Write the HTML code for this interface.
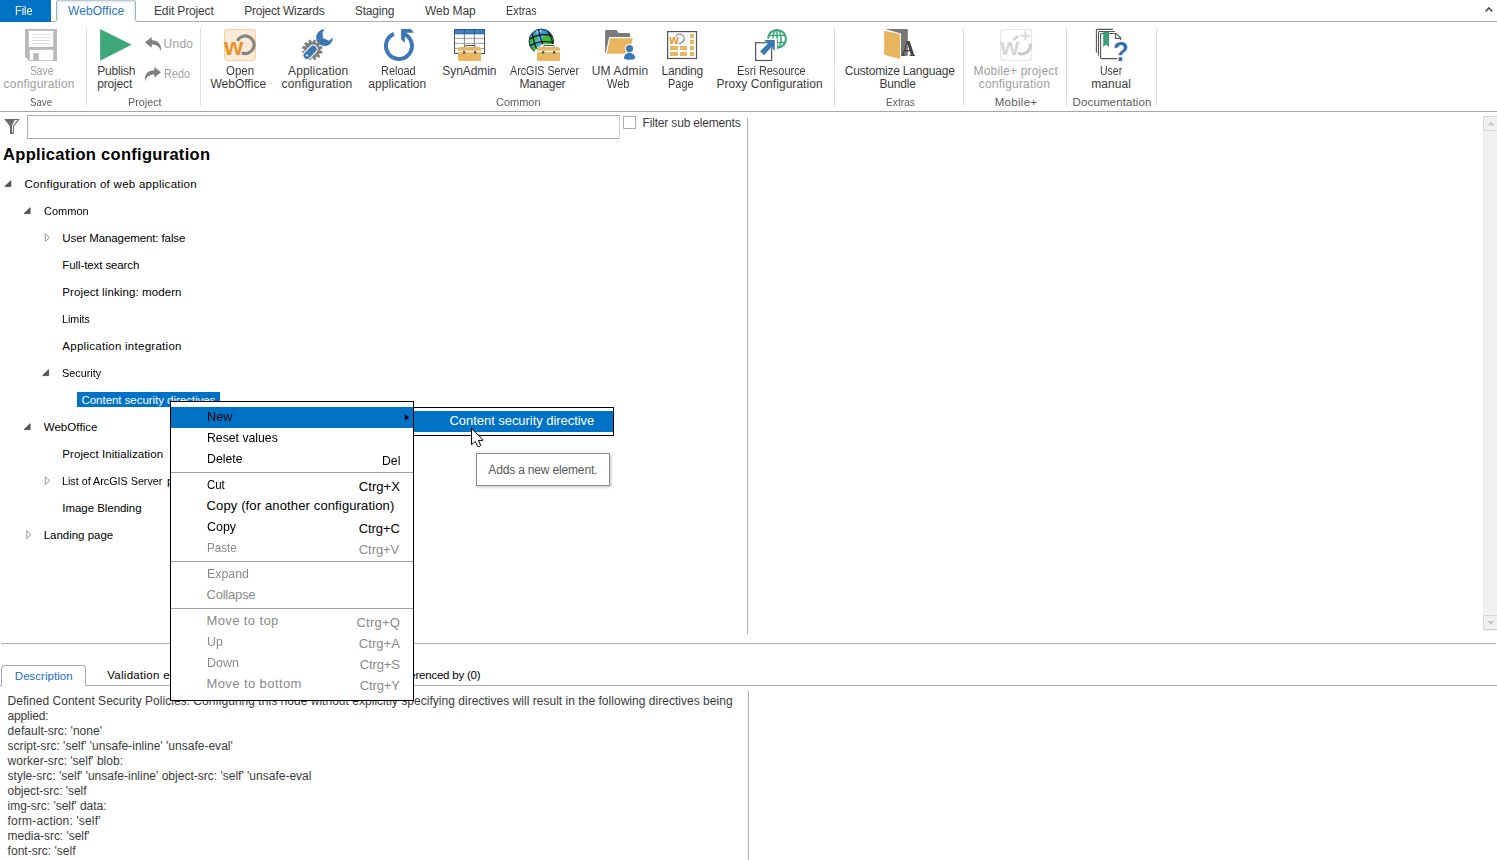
<!DOCTYPE html>
<html lang="en"><head><meta charset="utf-8"><title>WebOffice author</title>
<style>
html,body{margin:0;padding:0;background:#fff;}
body{width:1497px;height:860px;overflow:hidden;position:relative;font-family:"Liberation Sans",sans-serif;}
.t{position:absolute;white-space:pre;font-family:"Liberation Sans",sans-serif;}
.a{position:absolute;}
.ln{position:absolute;background:#ababab;}
.sep{position:absolute;background:#dedede;width:1px;top:28px;height:78px;}
svg{position:absolute;overflow:visible;}

</style></head>
<body>
<!-- tab strip -->
<div class="a" style="left:0;top:0;width:51px;height:22px;background:#0072c6"></div>
<svg width="1497" height="24" style="left:0;top:0">
<path d="M58.5 21.5 V2.5 H133.5 V21.5" fill="none" stroke="#eef2fc" stroke-width="1"/>
<path d="M57.5 21.5 V3 Q57.5 1.5 59 1.5 H133 Q134.5 1.5 134.5 3 V21.5" fill="none" stroke="#d9f3fc" stroke-width="1"/>
<path d="M51 21.5 H54.5 Q56.5 21.5 56.5 19.5 V2.5 Q56.5 0.2 58.5 0.2 H133.5 Q135.5 0.2 135.5 2.5 V19.5 Q135.5 21.5 137.5 21.5 H1497" fill="none" stroke="#ababab" stroke-width="1"/>
</svg>
<!-- ribbon -->
<div class="ln" style="left:0;top:111px;width:1497px;height:1px;background:#a5a5a5"></div>
<div class="sep" style="left:86px"></div>
<div class="sep" style="left:200px"></div>
<div class="sep" style="left:834px"></div>
<div class="sep" style="left:963px"></div>
<div class="sep" style="left:1066px"></div>
<div class="sep" style="left:1156px"></div>
<!-- filter row -->
<div class="a" style="left:27px;top:115px;width:593px;height:24px;border:1px solid #ababab;border-right-color:#d0d0d0;box-sizing:border-box"></div>
<div class="a" style="left:623px;top:116px;width:13px;height:13px;border:1px solid #ababab;box-sizing:border-box"></div>
<div class="ln" style="left:747px;top:118px;width:1px;height:516px"></div>
<!-- scrollbar -->
<div class="a" style="left:1483px;top:116px;width:14px;height:515px;background:#f0f0f0"></div>
<div class="a" style="left:1483px;top:116px;width:17px;height:15px;border:1px solid #d6d6d6;box-sizing:border-box;background:#f0f0f0"></div>
<div class="a" style="left:1483px;top:615px;width:17px;height:15px;border:1px solid #d6d6d6;box-sizing:border-box;background:#f0f0f0"></div>
<!-- tree selection -->
<div class="a" style="left:77px;top:392px;width:143px;height:15px;background:#0072c6"></div>
<!-- bottom -->
<div class="ln" style="left:1px;top:643px;width:1495px;height:1px"></div>
<div class="ln" style="left:0;top:685px;width:1497px;height:1px"></div>
<div class="a" style="left:1px;top:665px;width:85px;height:21px;background:#fff;border:1px solid #ababab;border-bottom:none;border-radius:4px 4px 0 0;box-sizing:border-box"></div>
<div class="ln" style="left:748px;top:691px;width:1px;height:169px"></div>
<svg width="1497" height="860" style="left:0;top:0">
<defs><filter id="gs" x="-10%" y="-10%" width="120%" height="120%"><feColorMatrix type="saturate" values="0"/></filter></defs>
<!-- chevron -->
<path d="M1485.6 11.3 L1488.9 7.9 L1492.2 11.3" fill="none" stroke="#555" stroke-width="1.7"/>
<!-- save icon -->
<g id="ic-save">
<path d="M25 29 H57 V61 H29 L25 56.7 Z" fill="#b9b9b9"/>
<rect x="28.8" y="30.8" width="24.4" height="16.1" fill="#fff"/>
<path d="M32 34.5 H50 M32 37.5 H50 M32 40.5 H50 M32 43.5 H50" stroke="#d9d9d9" stroke-width="0.9"/>
<rect x="29.8" y="49.9" width="23.4" height="10.3" fill="#fff"/>
<rect x="33.2" y="53.2" width="5.6" height="7.6" fill="#b9b9b9"/>
</g>
<!-- publish -->
<path d="M100.1 28.9 L131.6 44.8 L100.1 60.8 Z" fill="#3ea77a"/>
<!-- undo / redo -->
<path d="M145 42.3 L151.7 36.9 V40.2 C158.5 40.2 161.8 44.5 160.9 51.2 C159.5 46.6 156.5 44.6 151.7 44.6 V47.7 Z" fill="#7f7f7f"/>
<path d="M161 72.3 L154.3 66.9 V70.2 C147.5 70.2 144.2 74.5 145.1 81.2 C146.5 76.6 149.5 74.6 154.3 74.6 V77.7 Z" fill="#7f7f7f"/>
<!-- open weboffice -->
<rect x="224.5" y="29.5" width="31" height="31" rx="2.5" fill="#fdebd9" stroke="#f8cf9d" stroke-width="1"/>
<g><text x="224.1" y="55.4" font-family="Liberation Sans, sans-serif" font-weight="bold" font-size="24.5" fill="#e8912b" textLength="19.2" lengthAdjust="spacingAndGlyphs">w</text></g>
<path d="M237.4 40.8 A8.8 8.8 0 1 1 241.7 52.8" fill="none" stroke="#868681" stroke-width="3.2"/>
<!-- app config -->
<path d="M324.6 29.3 A8.4 8.4 0 1 0 332.9 37.3 L329.2 40.7 L322.9 37.9 L322.6 32.5 Z" fill="#3b78b5"/>
<path d="M320.2 50.7 L322.3 51.5 L321.7 53.5 L319.5 53.1 L318.7 54.5 L320.1 56.3 L318.7 57.7 L316.9 56.3 L315.5 57.1 L315.9 59.3 L313.9 59.9 L313.1 57.8 L311.5 57.8 L310.7 59.9 L308.7 59.3 L309.1 57.1 L307.7 56.3 L305.9 57.7 L304.5 56.3 L305.9 54.5 L305.1 53.1 L302.9 53.5 L302.3 51.5 L304.4 50.7 L304.4 49.1 L302.3 48.3 L302.9 46.3 L305.1 46.7 L305.9 45.3 L304.5 43.5 L305.9 42.1 L307.7 43.5 L309.1 42.7 L308.7 40.5 L310.7 39.9 L311.5 42.0 L313.1 42.0 L313.9 39.9 L315.9 40.5 L315.5 42.7 L316.9 43.5 L318.7 42.1 L320.1 43.5 L318.7 45.3 L319.5 46.7 L321.7 46.3 L322.3 48.3 L320.2 49.1Z" fill="#7f7f7f" stroke="#7f7f7f" stroke-width="0.6" stroke-linejoin="round"/>
<path d="M313.3 49.1 L306.9 55.5" stroke="#fff" stroke-width="9" stroke-linecap="round"/>
<path d="M313.3 49.1 L306.9 55.5" stroke="#3b78b5" stroke-width="6.8" stroke-linecap="round"/>
<circle cx="307" cy="55.5" r="1.1" fill="#fff"/>
<!-- reload -->
<path d="M393.9 33.9 A13 13 0 1 0 404.2 34" fill="none" stroke="#3b78b5" stroke-width="4"/>
<path d="M401.1 28.9 H410.9 L414.1 32.8 H407 L405 34.2 L404.9 42.8 L401.1 39.6 Z" fill="#3b78b5"/>
<!-- synadmin -->
<rect x="454.5" y="29.5" width="30" height="24" fill="#fff" stroke="#555" stroke-width="1"/>
<path d="M455 38.4 H484 M455 43.4 H484 M455 48.4 H484" stroke="#999" stroke-width="0.9"/>
<path d="M464.4 30 V53 M474.4 30 V53" stroke="#777" stroke-width="0.9"/>
<rect x="454.5" y="29.5" width="30" height="4.3" fill="#3f7fc1" stroke="#2a5a92" stroke-width="1"/>
<path d="M464.4 30 V34 M474.4 30 V34" stroke="#2a5a92" stroke-width="0.9"/>
<g transform="translate(458 0)">
<rect x="0" y="46.9" width="23" height="14" fill="#fff"/>
<path d="M6.9 47.5 V46 Q6.9 45.5 7.4 45.5 H16.6 Q17.1 45.5 17.1 46 V47.5" fill="none" stroke="#555" stroke-width="1"/>
<path d="M1.6 46.9 H21.4 L23 48.2 V50.8 H0 V48.2 Z" fill="#e9b55e"/>
<rect x="0" y="52.1" width="23" height="8.8" fill="#e9b55e"/>
<rect x="5" y="51" width="2.3" height="2.8" fill="#59616b"/><rect x="16" y="51" width="2.3" height="2.8" fill="#59616b"/>
</g>
<!-- arcgis server manager -->
<g>
<defs><radialGradient id="gg" cx="0.42" cy="0.45" r="0.6"><stop offset="0" stop-color="#6cc6f6"/><stop offset="0.6" stop-color="#2f93dc"/><stop offset="1" stop-color="#1d6fc0"/></radialGradient></defs>
<clipPath id="gclip"><circle cx="541.3" cy="41.3" r="12.2"/></clipPath>
<circle cx="541.3" cy="41.3" r="12.3" fill="url(#gg)"/>
<g clip-path="url(#gclip)">
<path d="M530.5 38.5 L536 34.8 L538.5 39 L533 42.5 L532.5 46 L529 45 Z" fill="#3fb93c"/>
<path d="M544.5 35 L549.5 33.5 L553.5 39 L553.5 44.5 L546 44.5 L541 42 L542 38.5 Z" fill="#45b83a"/>
<path d="M532 47 L536.5 44.5 L538 48 L534.5 52.5 L532.5 51Z" fill="#3fb93c"/>
<path d="M536 31 L541 29.5 L542 32 L537 33.5 Z" fill="#c9ecff" opacity="0.7"/>
<path d="M529 39.5 C536 34.5 546 33 553 36.5 M528.5 47 C536 41 548 40 555 43.5 M531.5 54 C537 48 546 46 552 49" stroke="#08140c" stroke-width="1.15" fill="none"/>
<path d="M538.5 29 C539.5 37 543 46 547 54 M546.5 29.5 C550.5 35 553 42 553.5 48 M532.5 33.5 C533.5 42 536.5 50 540.5 56" stroke="#08140c" stroke-width="1.15" fill="none"/>
</g>
<circle cx="541.3" cy="41.3" r="12.3" fill="none" stroke="#2a2a2a" stroke-width="0.9"/>
<path d="M534 53.4 L534.9 49.9 L542.3 44.3 H562 V62 H534 Z" fill="#fff"/>
</g>
<g transform="translate(537 0)">
<rect x="0" y="46.9" width="23" height="14" fill="#fff"/>
<path d="M6.9 47.5 V46 Q6.9 45.5 7.4 45.5 H16.6 Q17.1 45.5 17.1 46 V47.5" fill="none" stroke="#555" stroke-width="1"/>
<path d="M1.6 46.9 H21.4 L23 48.2 V50.8 H0 V48.2 Z" fill="#e9b55e"/>
<rect x="0" y="52.1" width="23" height="8.8" fill="#e9b55e"/>
<rect x="5" y="51" width="2.3" height="2.8" fill="#59616b"/><rect x="16" y="51" width="2.3" height="2.8" fill="#59616b"/>
</g>
<!-- um admin web -->
<path d="M605.1 31 Q605.1 30.1 606 30.1 H616.6 L618.6 33 H629 Q630 33 630 34 V36.9 H609.2 L605.8 52.8 H605.1 Z" fill="#7a7a7a"/>
<path d="M610.1 38.2 H632.9 L629 53.8 H606.8 Z" fill="#e9b55e"/>
<circle cx="629.5" cy="48.6" r="4.7" fill="#fff"/>
<path d="M622.8 60.9 V58 C622.8 54 626 51.7 629.5 51.7 C633 51.7 636.2 54 636.2 58 V60.9 Z" fill="#fff"/>
<circle cx="629.5" cy="48.6" r="3.6" fill="#3b78b5"/>
<path d="M623.9 58.5 C623.9 55 626.5 52.8 629.5 52.8 C632.5 52.8 635.1 55 635.1 58.5 C633 60.3 626 60.3 623.9 58.5 Z" fill="#3b78b5"/>
<!-- landing page -->
<rect x="667.6" y="31.6" width="28.9" height="26.9" fill="#fff" stroke="#555" stroke-width="1.2"/>
<g fill="#e9b55e"><rect x="690" y="34" width="4" height="4"/><rect x="690" y="40" width="4" height="4"/><rect x="690" y="46" width="4" height="4"/><rect x="690" y="52" width="4" height="4"/>
<rect x="670" y="46" width="8" height="4"/><rect x="680" y="46" width="7" height="4"/><rect x="670" y="52" width="8" height="4"/><rect x="680" y="52" width="7" height="4"/></g>
<g><text x="669.2" y="43.9" font-family="Liberation Sans, sans-serif" font-weight="bold" font-size="12" fill="#e8912b" textLength="9.4" lengthAdjust="spacingAndGlyphs">w</text></g>
<path d="M675.6 36.3 A4.6 4.6 0 1 1 678.2 43" fill="none" stroke="#78848a" stroke-width="1.2"/>
<!-- esri proxy -->
<g>
<clipPath id="eclip"><path d="M760 25 H792 V54 H777 V38.6 H760 Z"/></clipPath>
<g clip-path="url(#eclip)" fill="none" stroke="#3da679">
<circle cx="777" cy="38.9" r="8.9" stroke-width="2.1"/>
<ellipse cx="777" cy="38.9" rx="4.2" ry="8.9" stroke-width="1.5"/>
<path d="M777 30 V48 M769 35.5 H785 M769 42.5 H785" stroke-width="1.5"/>
</g>
<rect x="755.6" y="42.7" width="16" height="17.8" fill="#fff" stroke="#555" stroke-width="1.2"/>
<path d="M763.5 39.3 H775.6 V51.6 L771.6 47.8 L764 55.9 L759.3 51.3 L767.6 43.4 Z" fill="#fff"/>
<path d="M764.2 40.1 H774.8 V50.8 L771.3 47.3 L764 55.2 L760 51.3 L767.8 43.7 Z" fill="#3b78b5"/>
</g>
<!-- customize language bundle -->
<path d="M885.1 28.9 H906.8 Q907.8 28.9 907.8 29.9 V55.7 H901 V33.5 Z" fill="#777"/>
<path d="M884.1 30.8 L900 34 V58.9 L884.1 54.8 Z" fill="#e9b55e"/>
<g filter="url(#gs)"><text x="900.9" y="55.7" font-family="Liberation Serif, serif" font-weight="bold" font-size="24" fill="#444" textLength="14.4" lengthAdjust="spacingAndGlyphs">A</text></g>
<!-- mobile+ -->
<rect x="1000.6" y="29.5" width="30.9" height="30.9" rx="2.8" fill="#fff" stroke="#e6e6e6" stroke-width="1.2"/>
<g filter="url(#gs)"><text x="1000.3" y="55.4" font-family="Liberation Sans, sans-serif" font-weight="bold" font-size="24.5" fill="#d6d6d6" textLength="19" lengthAdjust="spacingAndGlyphs">w</text></g>
<path d="M1018 53.2 A8.8 8.8 0 0 0 1030.2 43.5" fill="none" stroke="#c9c9c9" stroke-width="3"/>
<path d="M1013.4 40.2 A8.8 8.8 0 0 1 1018.4 36.4" fill="none" stroke="#cfcfcf" stroke-width="2.6"/>
<path d="M1025.3 31.3 V40.6 M1020.9 35.9 H1029.9" stroke="#dadada" stroke-width="2.2"/>
<!-- user manual -->
<g fill="none" stroke="#555" stroke-width="1.1">
<path d="M1112.9 29.4 H1097.3 Q1096.4 29.4 1096.4 30.3 V52.8"/>
<path d="M1114.9 31.5 H1099.4 Q1098.5 31.5 1098.5 32.4 V55.7"/>
<path d="M1117.1 58.6 H1101.5 Q1100.6 58.6 1100.6 57.7 V34.4 Q1100.6 33.5 1101.5 33.5 H1116.3 L1120.7 37.8 V40.1"/>
<path d="M1115.5 33.5 V38.4 H1120.7"/>
</g>
<path d="M1103.2 31.8 H1109 V47 L1106.1 44.5 L1103.2 47 Z" fill="#3a9f77"/>
<g><text x="1112.9" y="60.7" font-family="Liberation Sans, sans-serif" font-weight="bold" font-size="28" fill="#3470b3" textLength="15.6" lengthAdjust="spacingAndGlyphs">?</text></g>
<!-- funnel -->
<path d="M4.2 119 H19.7 L13.9 126.6 V134 H10 V126.6 Z" fill="#6a6a6a"/>
<path d="M14.9 120.1 H17.4 L13 126 V132.8 H12.1 V125.3 Z" fill="#fff"/>
<!-- scroll arrows -->
<path d="M1487.5 125.5 L1491 121.5 L1494.5 125.5 Z" fill="#cdcdcd"/>
<path d="M1487.5 621 L1491 625 L1494.5 621 Z" fill="#cdcdcd"/>
<!-- tree arrows -->
<path d="M10.8 180.7 V186.6 H4.8 Z" fill="#595959" stroke="#262626" stroke-width="0.6" stroke-linejoin="round"/>
<path d="M30.1 207.7 V213.6 H24.1 Z" fill="#595959" stroke="#262626" stroke-width="0.6" stroke-linejoin="round"/>
<path d="M45.3 233.7 V241.5 L49.5 237.6 Z" fill="#fff" stroke="#989898" stroke-width="1" stroke-linejoin="miter"/>
<path d="M48.6 369.7 V375.6 H42.6 Z" fill="#595959" stroke="#262626" stroke-width="0.6" stroke-linejoin="round"/>
<path d="M30.1 423.7 V429.6 H24.1 Z" fill="#595959" stroke="#262626" stroke-width="0.6" stroke-linejoin="round"/>
<path d="M45.3 476.7 V484.5 L49.5 480.6 Z" fill="#fff" stroke="#989898" stroke-width="1" stroke-linejoin="miter"/>
<path d="M26.8 530.7 V538.5 L31.0 534.6 Z" fill="#fff" stroke="#989898" stroke-width="1" stroke-linejoin="miter"/>
</svg>
<span class="t " style="left:14.5px;top:3.20px;font-size:12px;line-height:16px;color:#fff;font-weight:normal;letter-spacing:0.000px;transform:scaleX(0.9047);transform-origin:0 0;">File</span>
<span class="t " style="left:68.0px;top:3.20px;font-size:12px;line-height:16px;color:#1f74c4;font-weight:normal;letter-spacing:0.076px;">WebOffice</span>
<span class="t " style="left:154.0px;top:3.20px;font-size:12px;line-height:16px;color:#3c3c3c;font-weight:normal;letter-spacing:-0.142px;">Edit Project</span>
<span class="t " style="left:244.2px;top:3.20px;font-size:12px;line-height:16px;color:#3c3c3c;font-weight:normal;letter-spacing:-0.245px;">Project Wizards</span>
<span class="t " style="left:354.8px;top:3.20px;font-size:12px;line-height:16px;color:#3c3c3c;font-weight:normal;letter-spacing:-0.167px;">Staging</span>
<span class="t " style="left:425.0px;top:3.20px;font-size:12px;line-height:16px;color:#3c3c3c;font-weight:normal;letter-spacing:-0.057px;">Web Map</span>
<span class="t " style="left:506.2px;top:3.20px;font-size:12px;line-height:16px;color:#3c3c3c;font-weight:normal;letter-spacing:0.000px;transform:scaleX(0.9055);transform-origin:0 0;">Extras</span>
<span class="t " style="left:29.7px;top:63.20px;font-size:12px;line-height:16px;color:#9e9e9e;font-weight:normal;letter-spacing:0.000px;transform:scaleX(0.8553);transform-origin:0 0;">Save</span>
<span class="t " style="left:3.6px;top:76.20px;font-size:12px;line-height:16px;color:#9e9e9e;font-weight:normal;letter-spacing:0.182px;">configuration</span>
<span class="t " style="left:29.7px;top:95.20px;font-size:11.5px;line-height:14px;color:#5c5c5c;font-weight:normal;letter-spacing:0.000px;transform:scaleX(0.8391);transform-origin:0 0;">Save</span>
<span class="t " style="left:97.2px;top:63.20px;font-size:12px;line-height:16px;color:#3c3c3c;font-weight:normal;letter-spacing:-0.177px;">Publish</span>
<span class="t " style="left:97.2px;top:76.20px;font-size:12px;line-height:16px;color:#3c3c3c;font-weight:normal;letter-spacing:-0.155px;">project</span>
<span class="t " style="left:163.5px;top:36.20px;font-size:12px;line-height:16px;color:#9e9e9e;font-weight:normal;letter-spacing:0.271px;">Undo</span>
<span class="t " style="left:164.3px;top:66.20px;font-size:12px;line-height:16px;color:#9e9e9e;font-weight:normal;letter-spacing:0.000px;transform:scaleX(0.9098);transform-origin:0 0;">Redo</span>
<span class="t " style="left:127.9px;top:95.20px;font-size:11.5px;line-height:14px;color:#5c5c5c;font-weight:normal;letter-spacing:0.000px;transform:scaleX(0.9386);transform-origin:0 0;">Project</span>
<span class="t " style="left:225.5px;top:63.20px;font-size:12px;line-height:16px;color:#3c3c3c;font-weight:normal;letter-spacing:0.000px;transform:scaleX(0.9537);transform-origin:0 0;">Open</span>
<span class="t " style="left:210.4px;top:76.20px;font-size:12px;line-height:16px;color:#3c3c3c;font-weight:normal;letter-spacing:0.013px;">WebOffice</span>
<span class="t " style="left:288.0px;top:63.20px;font-size:12px;line-height:16px;color:#3c3c3c;font-weight:normal;letter-spacing:0.148px;">Application</span>
<span class="t " style="left:281.6px;top:76.20px;font-size:12px;line-height:16px;color:#3c3c3c;font-weight:normal;letter-spacing:0.157px;">configuration</span>
<span class="t " style="left:381.2px;top:63.20px;font-size:12px;line-height:16px;color:#3c3c3c;font-weight:normal;letter-spacing:0.000px;transform:scaleX(0.9124);transform-origin:0 0;">Reload</span>
<span class="t " style="left:368.2px;top:76.20px;font-size:12px;line-height:16px;color:#3c3c3c;font-weight:normal;letter-spacing:0.073px;">application</span>
<span class="t " style="left:442.3px;top:63.20px;font-size:12px;line-height:16px;color:#3c3c3c;font-weight:normal;letter-spacing:-0.072px;">SynAdmin</span>
<span class="t " style="left:509.5px;top:63.20px;font-size:12px;line-height:16px;color:#3c3c3c;font-weight:normal;letter-spacing:0.000px;transform:scaleX(0.8919);transform-origin:0 0;">ArcGIS Server</span>
<span class="t " style="left:519.5px;top:76.20px;font-size:12px;line-height:16px;color:#3c3c3c;font-weight:normal;letter-spacing:-0.212px;">Manager</span>
<span class="t " style="left:496.0px;top:95.20px;font-size:11.5px;line-height:14px;color:#5c5c5c;font-weight:normal;letter-spacing:0.000px;transform:scaleX(0.9538);transform-origin:0 0;">Common</span>
<span class="t " style="left:591.7px;top:63.20px;font-size:12px;line-height:16px;color:#3c3c3c;font-weight:normal;letter-spacing:0.163px;">UM Admin</span>
<span class="t " style="left:606.7px;top:76.20px;font-size:12px;line-height:16px;color:#3c3c3c;font-weight:normal;letter-spacing:0.000px;transform:scaleX(0.9195);transform-origin:0 0;">Web</span>
<span class="t " style="left:661.6px;top:63.20px;font-size:12px;line-height:16px;color:#3c3c3c;font-weight:normal;letter-spacing:-0.170px;">Landing</span>
<span class="t " style="left:668.3px;top:76.20px;font-size:12px;line-height:16px;color:#3c3c3c;font-weight:normal;letter-spacing:0.000px;transform:scaleX(0.9133);transform-origin:0 0;">Page</span>
<span class="t " style="left:737.4px;top:63.20px;font-size:12px;line-height:16px;color:#3c3c3c;font-weight:normal;letter-spacing:0.000px;transform:scaleX(0.9116);transform-origin:0 0;">Esri Resource</span>
<span class="t " style="left:716.4px;top:76.20px;font-size:12px;line-height:16px;color:#3c3c3c;font-weight:normal;letter-spacing:0.045px;">Proxy Configuration</span>
<span class="t " style="left:844.8px;top:63.20px;font-size:12px;line-height:16px;color:#3c3c3c;font-weight:normal;letter-spacing:-0.195px;">Customize Language</span>
<span class="t " style="left:879.5px;top:76.20px;font-size:12px;line-height:16px;color:#3c3c3c;font-weight:normal;letter-spacing:-0.195px;">Bundle</span>
<span class="t " style="left:885.6px;top:95.20px;font-size:11.5px;line-height:14px;color:#5c5c5c;font-weight:normal;letter-spacing:0.000px;transform:scaleX(0.8867);transform-origin:0 0;">Extras</span>
<span class="t " style="left:973.5px;top:63.20px;font-size:12px;line-height:16px;color:#9e9e9e;font-weight:normal;letter-spacing:0.184px;">Mobile+ project</span>
<span class="t " style="left:978.8px;top:76.20px;font-size:12px;line-height:16px;color:#9e9e9e;font-weight:normal;letter-spacing:0.198px;">configuration</span>
<span class="t " style="left:994.7px;top:95.20px;font-size:11.5px;line-height:14px;color:#5c5c5c;font-weight:normal;letter-spacing:0.301px;">Mobile+</span>
<span class="t " style="left:1100.3px;top:63.20px;font-size:12px;line-height:16px;color:#3c3c3c;font-weight:normal;letter-spacing:0.000px;transform:scaleX(0.8760);transform-origin:0 0;">User</span>
<span class="t " style="left:1091.2px;top:76.20px;font-size:12px;line-height:16px;color:#3c3c3c;font-weight:normal;letter-spacing:0.068px;">manual</span>
<span class="t " style="left:1072.6px;top:95.20px;font-size:11.5px;line-height:14px;color:#5c5c5c;font-weight:normal;letter-spacing:0.120px;">Documentation</span>
<span class="t " style="left:642.6px;top:115.20px;font-size:12px;line-height:16px;color:#3c3c3c;font-weight:normal;letter-spacing:-0.182px;">Filter sub elements</span>
<span class="t " style="left:3.1px;top:144.20px;font-size:16.5px;line-height:20px;color:#000;font-weight:bold;letter-spacing:0.295px;">Application configuration</span>
<span class="t " style="left:24.5px;top:177.20px;font-size:11.5px;line-height:14px;color:#000;font-weight:normal;letter-spacing:0.275px;">Configuration of web application</span>
<span class="t " style="left:43.8px;top:204.20px;font-size:11.5px;line-height:14px;color:#000;font-weight:normal;letter-spacing:0.000px;transform:scaleX(0.9581);transform-origin:0 0;">Common</span>
<span class="t " style="left:62.3px;top:231.20px;font-size:11.5px;line-height:14px;color:#000;font-weight:normal;letter-spacing:-0.105px;">User Management: false</span>
<span class="t " style="left:62.3px;top:258.20px;font-size:11.5px;line-height:14px;color:#000;font-weight:normal;letter-spacing:-0.101px;">Full-text search</span>
<span class="t " style="left:62.3px;top:285.20px;font-size:11.5px;line-height:14px;color:#000;font-weight:normal;letter-spacing:0.101px;">Project linking: modern</span>
<span class="t " style="left:62.3px;top:312.20px;font-size:11.5px;line-height:14px;color:#000;font-weight:normal;letter-spacing:0.000px;transform:scaleX(0.9290);transform-origin:0 0;">Limits</span>
<span class="t " style="left:62.3px;top:339.20px;font-size:11.5px;line-height:14px;color:#000;font-weight:normal;letter-spacing:0.274px;">Application integration</span>
<span class="t " style="left:62.3px;top:366.20px;font-size:11.5px;line-height:14px;color:#000;font-weight:normal;letter-spacing:0.000px;transform:scaleX(0.9435);transform-origin:0 0;">Security</span>
<span class="t " style="left:81.5px;top:393.20px;font-size:11.5px;line-height:14px;color:#fff;font-weight:normal;letter-spacing:-0.041px;">Content security directives</span>
<span class="t " style="left:43.7px;top:420.20px;font-size:11.5px;line-height:14px;color:#000;font-weight:normal;letter-spacing:0.065px;">WebOffice</span>
<span class="t " style="left:62.3px;top:447.20px;font-size:11.5px;line-height:14px;color:#000;font-weight:normal;letter-spacing:0.082px;">Project Initialization</span>
<span class="t " style="left:62.3px;top:474.20px;font-size:11.5px;line-height:14px;color:#000;font-weight:normal;letter-spacing:0.000px;transform:scaleX(0.9350);transform-origin:0 0;">List of ArcGIS Server</span>
<span class="t " style="left:166.9px;top:474.20px;font-size:11.5px;line-height:14px;color:#000;font-weight:normal;letter-spacing:0.260px;">projects</span>
<span class="t " style="left:62.3px;top:501.20px;font-size:11.5px;line-height:14px;color:#000;font-weight:normal;letter-spacing:-0.048px;">Image Blending</span>
<span class="t " style="left:43.7px;top:528.20px;font-size:11.5px;line-height:14px;color:#000;font-weight:normal;letter-spacing:-0.020px;">Landing page</span>
<span class="t " style="left:14.8px;top:669.20px;font-size:11.5px;line-height:14px;color:#1c6dd0;font-weight:normal;letter-spacing:0.027px;">Description</span>
<span class="t " style="left:107.2px;top:668.20px;font-size:11.5px;line-height:14px;color:#000;font-weight:normal;letter-spacing:0.283px;">Validation errors (0)</span>
<span class="t " style="left:392.0px;top:668.20px;font-size:11.5px;line-height:14px;color:#000;font-weight:normal;letter-spacing:-0.215px;">Referenced by (0)</span>
<span class="t " style="left:7.6px;top:693.20px;font-size:12px;line-height:16px;color:#3a3a3a;font-weight:normal;letter-spacing:0.028px;">Defined Content Security Policies. Configuring this node without explicitly specifying directives will result in the following directives being</span>
<span class="t " style="left:7.6px;top:708.20px;font-size:12px;line-height:16px;color:#3a3a3a;font-weight:normal;letter-spacing:-0.164px;">applied:</span>
<span class="t " style="left:7.6px;top:723.20px;font-size:12px;line-height:16px;color:#3a3a3a;font-weight:normal;letter-spacing:0.024px;">default-src: &#x27;none&#x27;</span>
<span class="t " style="left:7.6px;top:738.20px;font-size:12px;line-height:16px;color:#3a3a3a;font-weight:normal;letter-spacing:0.015px;">script-src: &#x27;self&#x27; &#x27;unsafe-inline&#x27; &#x27;unsafe-eval&#x27;</span>
<span class="t " style="left:7.6px;top:753.20px;font-size:12px;line-height:16px;color:#3a3a3a;font-weight:normal;letter-spacing:0.005px;">worker-src: &#x27;self&#x27; blob:</span>
<span class="t " style="left:7.6px;top:768.20px;font-size:12px;line-height:16px;color:#3a3a3a;font-weight:normal;letter-spacing:0.006px;">style-src: &#x27;self&#x27; &#x27;unsafe-inline&#x27; object-src: &#x27;self&#x27; &#x27;unsafe-eval</span>
<span class="t " style="left:7.6px;top:783.20px;font-size:12px;line-height:16px;color:#3a3a3a;font-weight:normal;letter-spacing:-0.047px;">object-src: &#x27;self</span>
<span class="t " style="left:7.6px;top:798.20px;font-size:12px;line-height:16px;color:#3a3a3a;font-weight:normal;letter-spacing:-0.019px;">img-src: &#x27;self&#x27; data:</span>
<span class="t " style="left:7.6px;top:813.20px;font-size:12px;line-height:16px;color:#3a3a3a;font-weight:normal;letter-spacing:0.164px;">form-action: &#x27;self&#x27;</span>
<span class="t " style="left:7.6px;top:828.20px;font-size:12px;line-height:16px;color:#3a3a3a;font-weight:normal;letter-spacing:-0.044px;">media-src: &#x27;self&#x27;</span>
<span class="t " style="left:7.6px;top:843.20px;font-size:12px;line-height:16px;color:#3a3a3a;font-weight:normal;letter-spacing:0.019px;">font-src: &#x27;self</span>
<!-- context menu -->
<div class="a" style="left:170px;top:401px;width:244px;height:300px;background:#fff;border:1px solid #000;box-sizing:border-box"></div>
<div class="a" style="left:171px;top:407px;width:242px;height:21px;background:#0072c6"></div>
<div class="a" style="left:171px;top:472px;width:242px;height:1px;background:#a0a0a0"></div>
<div class="a" style="left:171px;top:561px;width:242px;height:1px;background:#a0a0a0"></div>
<div class="a" style="left:171px;top:608px;width:242px;height:1px;background:#a0a0a0"></div>
<!-- submenu -->
<div class="a" style="left:413px;top:407px;width:201px;height:29px;background:#fff;border:1px solid #000;box-sizing:border-box"></div>
<div class="a" style="left:414px;top:411px;width:199px;height:21px;background:#0072c6"></div>
<!-- tooltip -->
<div class="a" style="left:476px;top:453px;width:134px;height:33px;background:#fff;border:1px solid #8c8c8c;box-sizing:border-box;box-shadow:1px 1px 3px rgba(0,0,0,.25)"></div>
<span class="t over" style="left:206.5px;top:408.20px;font-size:13px;line-height:17px;color:#000;font-weight:normal;letter-spacing:0.000px;transform:scaleX(0.9725);transform-origin:0 0;">New</span>
<span class="t over" style="left:206.5px;top:429.20px;font-size:13px;line-height:17px;color:#000;font-weight:normal;letter-spacing:0.000px;transform:scaleX(0.9420);transform-origin:0 0;">Reset values</span>
<span class="t over" style="left:206.5px;top:450.20px;font-size:13px;line-height:17px;color:#000;font-weight:normal;letter-spacing:0.000px;transform:scaleX(0.9474);transform-origin:0 0;">Delete</span>
<span class="t over" style="left:381.5px;top:452.20px;font-size:13px;line-height:17px;color:#000;font-weight:normal;letter-spacing:0.000px;transform:scaleX(0.9428);transform-origin:0 0;">Del</span>
<span class="t over" style="left:206.5px;top:476.20px;font-size:13px;line-height:17px;color:#000;font-weight:normal;letter-spacing:0.000px;transform:scaleX(0.8797);transform-origin:0 0;">Cut</span>
<span class="t over" style="left:358.8px;top:478.20px;font-size:13px;line-height:17px;color:#000;font-weight:normal;letter-spacing:0.054px;">Ctrg+X</span>
<span class="t over" style="left:206.5px;top:497.20px;font-size:13px;line-height:17px;color:#000;font-weight:normal;letter-spacing:0.137px;">Copy (for another configuration)</span>
<span class="t over" style="left:206.5px;top:518.20px;font-size:13px;line-height:17px;color:#000;font-weight:normal;letter-spacing:0.000px;transform:scaleX(0.9585);transform-origin:0 0;">Copy</span>
<span class="t over" style="left:358.8px;top:520.20px;font-size:13px;line-height:17px;color:#000;font-weight:normal;letter-spacing:-0.089px;">Ctrg+C</span>
<span class="t over" style="left:206.5px;top:539.20px;font-size:13px;line-height:17px;color:#8a8a8a;font-weight:normal;letter-spacing:0.000px;transform:scaleX(0.8932);transform-origin:0 0;">Paste</span>
<span class="t over" style="left:358.8px;top:541.20px;font-size:13px;line-height:17px;color:#8a8a8a;font-weight:normal;letter-spacing:-0.066px;">Ctrg+V</span>
<span class="t over" style="left:206.5px;top:565.20px;font-size:13px;line-height:17px;color:#8a8a8a;font-weight:normal;letter-spacing:0.000px;transform:scaleX(0.9502);transform-origin:0 0;">Expand</span>
<span class="t over" style="left:206.5px;top:586.20px;font-size:13px;line-height:17px;color:#8a8a8a;font-weight:normal;letter-spacing:-0.242px;">Collapse</span>
<span class="t over" style="left:206.5px;top:612.20px;font-size:13px;line-height:17px;color:#8a8a8a;font-weight:normal;letter-spacing:0.386px;">Move to top</span>
<span class="t over" style="left:356.4px;top:614.20px;font-size:13px;line-height:17px;color:#8a8a8a;font-weight:normal;letter-spacing:0.247px;">Ctrg+Q</span>
<span class="t over" style="left:206.5px;top:633.20px;font-size:13px;line-height:17px;color:#8a8a8a;font-weight:normal;letter-spacing:0.000px;transform:scaleX(0.9504);transform-origin:0 0;">Up</span>
<span class="t over" style="left:358.8px;top:635.20px;font-size:13px;line-height:17px;color:#8a8a8a;font-weight:normal;letter-spacing:0.054px;">Ctrg+A</span>
<span class="t over" style="left:206.5px;top:654.20px;font-size:13px;line-height:17px;color:#8a8a8a;font-weight:normal;letter-spacing:0.000px;transform:scaleX(0.9624);transform-origin:0 0;">Down</span>
<span class="t over" style="left:359.7px;top:656.20px;font-size:13px;line-height:17px;color:#8a8a8a;font-weight:normal;letter-spacing:-0.126px;">Ctrg+S</span>
<span class="t over" style="left:206.5px;top:675.20px;font-size:13px;line-height:17px;color:#8a8a8a;font-weight:normal;letter-spacing:0.407px;">Move to bottom</span>
<span class="t over" style="left:359.7px;top:677.20px;font-size:13px;line-height:17px;color:#8a8a8a;font-weight:normal;letter-spacing:-0.126px;">Ctrg+Y</span>
<span class="t over" style="left:449.5px;top:412.20px;font-size:13px;line-height:17px;color:#fff;font-weight:normal;letter-spacing:-0.046px;">Content security directive</span>
<span class="t over" style="left:488.3px;top:462.20px;font-size:12px;line-height:16px;color:#575757;font-weight:normal;letter-spacing:-0.165px;">Adds a new element.</span>
<svg width="1497" height="860" style="left:0;top:0">
<path d="M404.8 414.2 L409 417.5 L404.8 420.8 Z" fill="#000"/>
<!-- cursor -->
<path d="M471.5 428.4 V444.7 L475.3 441.4 L477.7 446.4 Q479.3 447.6 480.7 445.4 L478.4 440.4 H482.8 V439.5 Z" fill="#fff" stroke="#000" stroke-width="1" stroke-linejoin="miter"/>
</svg>

</body></html>
